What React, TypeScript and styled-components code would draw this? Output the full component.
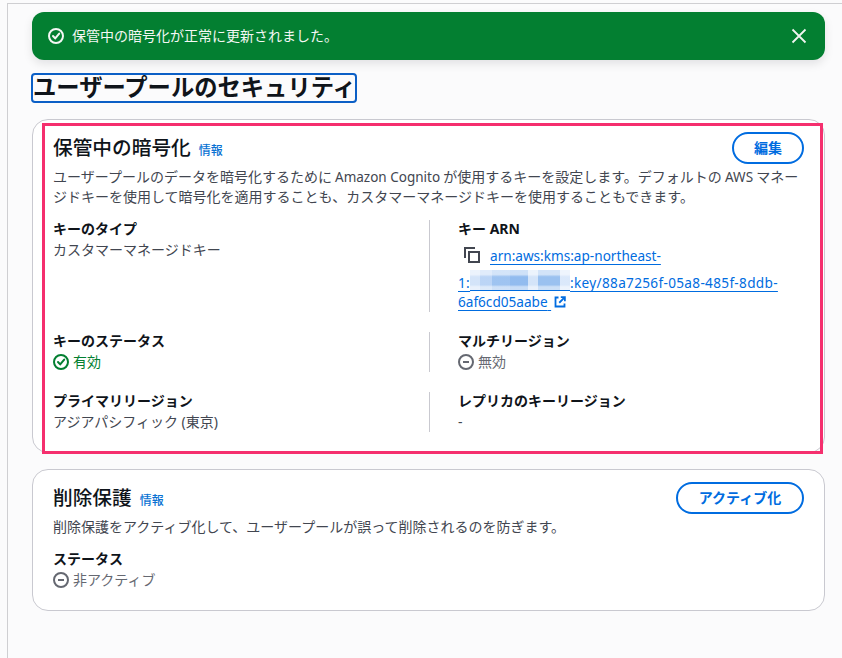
import React from "react";
import styled, { createGlobalStyle } from "styled-components";

const GlobalStyle = createGlobalStyle`
  html, body {
    margin: 0;
    padding: 0;
    background: #fbfbfc;
  }
  body {
    font-family: "Noto Sans", "Noto Sans CJK JP", sans-serif;
    font-size: 14px;
    line-height: 20px;
    color: #0f141a;
  }
`;

const Frame = styled.div`
  box-sizing: border-box;
  width: 842px;
  height: 658px;
  overflow: hidden;
  padding: 3px 0 0 7px;
`;

const Inner = styled.div`
  box-sizing: border-box;
  height: 655px;
  border-top: 1px solid #cfcfd2;
  border-left: 1px solid #cfcfd2;
  padding: 8px 17px 0 24px;
`;

const Flash = styled.div`
  display: flex;
  align-items: center;
  height: 48px;
  box-sizing: border-box;
  padding: 0 18px 0 16px;
  background: #037f31;
  border-radius: 12px;
  color: #f4f7f4;
  box-shadow: 0 4px 10px rgba(0, 7, 22, 0.1);
`;

const FlashText = styled.span`
  flex: 1;
  margin-left: 8px;
`;

const Heading = styled.h1`
  box-sizing: border-box;
  width: 326px;
  height: 30px;
  margin: 13px 0 0 -1px;
  border: 2px solid #0b5fc6;
  border-radius: 4px;
  font-size: 23.3px;
  line-height: 25px;
  font-weight: 700;
  white-space: nowrap;
`;

const Card = styled.section<{ $height: number; $top: number }>`
  position: relative;
  box-sizing: border-box;
  height: ${({ $height }) => $height}px;
  margin-top: ${({ $top }) => $top}px;
  padding: 12px 20px 0;
  background: #fff;
  border: 1px solid #c9c9d0;
  border-radius: 16px;
`;

const Highlight = styled.div`
  position: absolute;
  left: 9px;
  top: 3px;
  width: 781px;
  height: 331px;
  box-sizing: border-box;
  border: 3px solid #f52f6e;
  pointer-events: none;
`;

const CardHeader = styled.div`
  display: flex;
  align-items: flex-start;
  justify-content: space-between;
  height: 35px;
`;

const Title = styled.div`
  display: flex;
  align-items: baseline;
  padding-top: 2px;
`;

const CardTitle = styled.h2`
  margin: 0;
  font-size: 19.7px;
  line-height: 28px;
  font-weight: 500;
`;

const InfoLink = styled.a`
  margin-left: 8px;
  font-size: 12px;
  font-weight: 500;
  color: #0972d3;
`;

const Button = styled.button<{ $width: number }>`
  box-sizing: border-box;
  width: ${({ $width }) => $width}px;
  height: 32px;
  padding: 0;
  background: #fff;
  border: 2px solid #006ce0;
  border-radius: 16px;
  color: #006ce0;
  font: 600 14px/20px "Noto Sans", "Noto Sans CJK JP", sans-serif;
`;

const Description = styled.p`
  margin: 0;
  color: #424650;
  width: 750px;
  word-spacing: -0.5px;
`;

const Latin = styled.span`
  font-size: 13.5px;
  word-spacing: 0;
`;

const Grid = styled.div`
  display: grid;
  grid-template-columns: 376px 1fr;
  margin-top: 13px;
  row-gap: 20px;
`;

const Field = styled.div`
  min-width: 0;
`;

const DividedField = styled(Field)`
  border-left: 1px solid #c9c9d0;
  padding-left: 28px;
  padding-right: 30px;
`;

const Label = styled.div`
  margin: -1px 0 1px;
  font-weight: 700;
`;

const Value = styled.div`
  color: #424650;
`;

const Status = styled.div<{ $color: string }>`
  display: flex;
  align-items: center;
  gap: 4px;
  color: ${({ $color }) => $color};
`;

const ArnLink = styled.div`
  font-size: 13.6px;
  line-height: 19px;
  padding-bottom: 0.5px;
  color: #006ce0;
`;

const ArnText = styled.a`
  color: #006ce0;
  text-decoration: underline;
  text-underline-offset: 3px;
  text-decoration-thickness: 1px;
`;

const MaskedLine = styled.span`
  white-space: nowrap;
  letter-spacing: 0.32px;
`;

const CopySlot = styled.span`
  display: inline-block;
  box-sizing: border-box;
  overflow: hidden;
  vertical-align: -9px;
  height: 30px;
  padding-top: 7px;
  margin: 0 10px 0 6px;

  svg {
    display: block;
  }
`;

const ExternalIcon = styled.svg`
  display: inline-block;
  vertical-align: -1px;
  margin-left: 3px;
`;

const Masked = styled.span`
  display: inline-block;
  vertical-align: -3px;
  box-sizing: border-box;
  width: 100px;
  height: 21px;
  border-bottom: 1px solid #006ce0;
  background:
    linear-gradient(
      180deg,
      rgba(255, 255, 255, 0.6) 0 22%,
      rgba(255, 255, 255, 0.1) 34% 74%,
      rgba(255, 255, 255, 0.55) 84%
    ),
    linear-gradient(
      90deg,
      #cfe1f8 0 10%,
      #b4d0f5 10% 22%,
      #94bdef 22% 40%,
      #86b4ed 40% 58%,
      #cfe1f8 58% 68%,
      #8fbaee 68% 90%,
      #d7e6fa 90% 100%
    );
`;

const CheckCircle = ({ color, size }: { color: string; size: number }) => (
  <svg width={size} height={size} viewBox="0 0 16 16" fill="none" stroke={color} strokeWidth="2">
    <circle cx="8" cy="8" r="7" />
    <path d="M5 8l2.2 2.4L11.2 5.6" strokeLinecap="round" strokeLinejoin="round" />
  </svg>
);

const MinusCircle = () => (
  <svg width="16" height="16" viewBox="0 0 16 16" fill="none" stroke="#656871" strokeWidth="2">
    <circle cx="8" cy="8" r="7" />
    <path d="M5 8h6" />
  </svg>
);

const CloseIcon = () => (
  <svg width="16" height="16" viewBox="0 0 16 16" fill="none" stroke="#f0f4f0" strokeWidth="1.8">
    <path d="M1.500 1.500l13 13M14.500 1.500l-13 13" />
  </svg>
);

const App: React.FC = () => (
  <>
    <GlobalStyle />
    <Frame>
      <Inner>
        <Flash>
          <CheckCircle color="#f4f7f4" size={16} />
          <FlashText>保管中の暗号化が正常に更新されました。</FlashText>
          <CloseIcon />
        </Flash>
        <Heading>ユーザープールのセキュリティ</Heading>
        <Card $height={334} $top={16}>
          <CardHeader>
            <Title>
              <CardTitle>保管中の暗号化</CardTitle>
              <InfoLink>情報</InfoLink>
            </Title>
            <Button $width={72}>編集</Button>
          </CardHeader>
          <Description>
            ユーザープールのデータを暗号化するために <Latin>Amazon Cognito</Latin> が使用するキーを設定します。デフォルトの{" "}
            <Latin>AWS</Latin> マネージドキーを使用して暗号化を適用することも、カスタマーマネージドキーを使用することもできます。
          </Description>
          <Grid>
            <Field>
              <Label>キーのタイプ</Label>
              <Value>カスタマーマネージドキー</Value>
            </Field>
            <DividedField>
              <Label>キー ARN</Label>
              <ArnLink>
                <CopySlot>
                  <svg width="16" height="16" viewBox="0 0 16 16" fill="none" stroke="#424650" strokeWidth="2">
                    <path d="M1 11V1h10" />
                    <rect x="5" y="5" width="10" height="10" />
                  </svg>
                </CopySlot>
                <ArnText>
                  arn:aws:kms:ap-northeast-
                  <MaskedLine>
                    1:
                    <Masked />
                    :key/88a7256f-05a8-485f-8ddb-
                  </MaskedLine>
                  6af6cd05aabe{" "}
                </ArnText>
                <ExternalIcon width="12" height="12" viewBox="0 0 16 16" fill="none" stroke="#006ce0" strokeWidth="2.4">
                  <path d="M6 2H2v12h12v-4" />
                  <path d="M9 1.500h5.500V7M14.500 1.500L7 9" />
                </ExternalIcon>
              </ArnLink>
            </DividedField>
            <Field>
              <Label>キーのステータス</Label>
              <Status $color="#037f31">
                <CheckCircle color="#037f31" size={16} />
                有効
              </Status>
            </Field>
            <DividedField>
              <Label>マルチリージョン</Label>
              <Status $color="#656871">
                <MinusCircle />
                無効
              </Status>
            </DividedField>
            <Field>
              <Label>プライマリリージョン</Label>
              <Value>アジアパシフィック (東京)</Value>
            </Field>
            <DividedField>
              <Label>レプリカのキーリージョン</Label>
              <Value>-</Value>
            </DividedField>
          </Grid>
          <Highlight />
        </Card>
        <Card $height={142} $top={16}>
          <CardHeader>
            <Title>
              <CardTitle>削除保護</CardTitle>
              <InfoLink>情報</InfoLink>
            </Title>
            <Button $width={128}>アクティブ化</Button>
          </CardHeader>
          <Description>削除保護をアクティブ化して、ユーザープールが誤って削除されるのを防ぎます。</Description>
          <Grid>
            <Field>
              <Label>ステータス</Label>
              <Status $color="#656871">
                <MinusCircle />
                非アクティブ
              </Status>
            </Field>
          </Grid>
        </Card>
      </Inner>
    </Frame>
  </>
);

export default App;
